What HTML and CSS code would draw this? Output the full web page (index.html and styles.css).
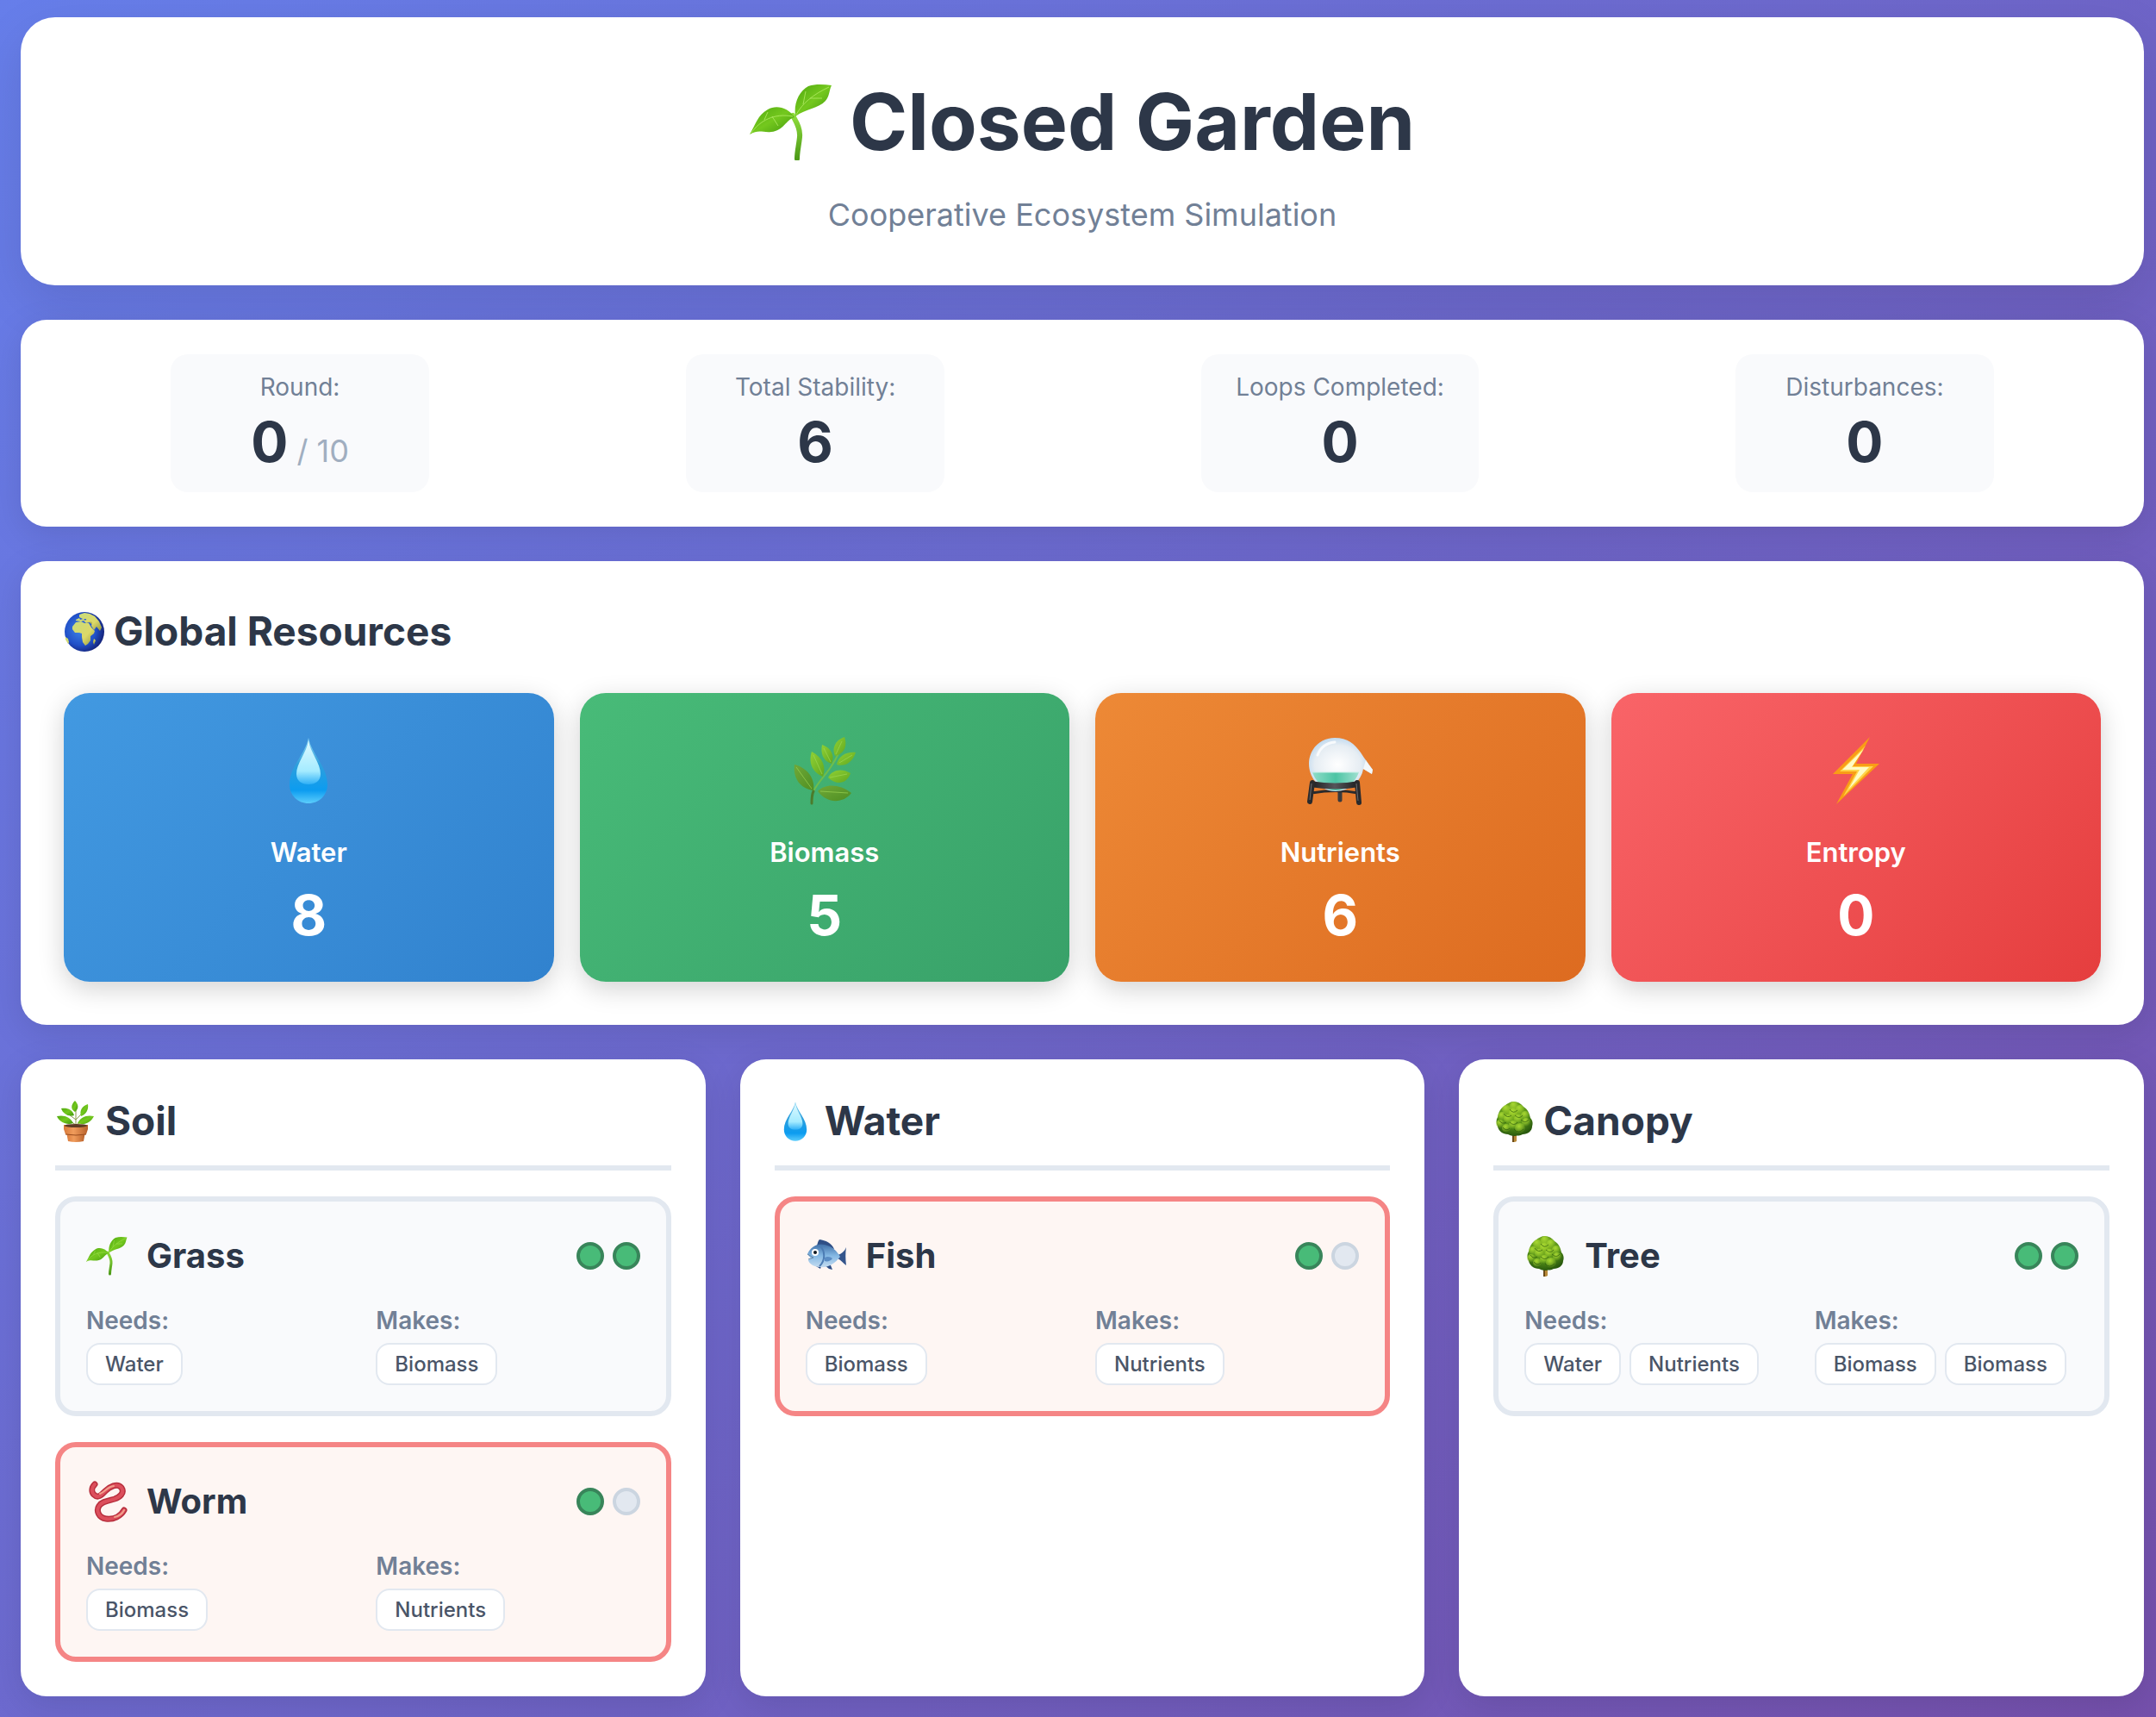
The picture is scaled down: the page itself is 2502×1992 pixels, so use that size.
FILE: index.html
```html
<!DOCTYPE html>
<html lang="en">

<head>
    <meta charset="UTF-8">
    <meta name="viewport" content="width=device-width, initial-scale=1.0">
    <title>Closed Garden</title>
    <link rel="stylesheet" href="styles.css">
</head>

<body>
    <!-- shared icons -->
    <svg class="sprite" aria-hidden="true">
        <defs>
            <linearGradient id="leaf" x1="0" y1="0" x2="1" y2="1">
                <stop offset="0" stop-color="#4fa80f" />
                <stop offset="0.5" stop-color="#74c81e" />
                <stop offset="1" stop-color="#3f960c" />
            </linearGradient>
            <linearGradient id="stem" x1="0" y1="0" x2="0" y2="1">
                <stop offset="0" stop-color="#8fdc3c" />
                <stop offset="1" stop-color="#4c9a17" />
            </linearGradient>
            <linearGradient id="drop" x1="0" y1="0" x2="0" y2="1">
                <stop offset="0" stop-color="#8fd8f5" />
                <stop offset="0.4" stop-color="#2f9fdc" />
                <stop offset="0.8" stop-color="#0c9cf0" />
                <stop offset="1" stop-color="#5ccdfc" />
            </linearGradient>
            <linearGradient id="drop-shine" x1="0" y1="0" x2="0" y2="1">
                <stop offset="0" stop-color="#e0faff" />
                <stop offset="0.7" stop-color="#a4ebff" />
                <stop offset="1" stop-color="#2fb0f7" />
            </linearGradient>
            <radialGradient id="crown" cx="0.45" cy="0.3" r="0.7">
                <stop offset="0" stop-color="#93c424" />
                <stop offset="0.6" stop-color="#548f18" />
                <stop offset="1" stop-color="#2a5a0e" />
            </radialGradient>
            <radialGradient id="clump" cx="0.4" cy="0.3" r="0.7">
                <stop offset="0" stop-color="#a8d832" />
                <stop offset="1" stop-color="#a8d832" stop-opacity="0" />
            </radialGradient>
        </defs>

        <symbol id="sprout" viewBox="0 0 96 88">
            <path d="M50 36c3 6 9 14 8 25-1 10-3 17-3 25" fill="none" stroke="url(#stem)" stroke-width="6" stroke-linecap="round" />
            <path d="M53 37C51 22 57 8 68 2 77-1 86 0 95 1c-3 6-2 12-7 18-8 9-23 9-35 18z" fill="url(#leaf)" />
            <path d="M52 38C45 27 31 23 21 29 9 36 7 46 0 58c10-6 15-2 25-3 14-1 17-14 27-17z" fill="url(#leaf)" />
            <path d="M54 35C61 22 73 12 92 3M62 23l3-15M70 16l14 0M2 56C12 42 28 33 50 37M17 41l4-9M26 37l7 11" fill="none" stroke="#b4ec66" stroke-width="1" opacity="0.8" />
        </symbol>

        <symbol id="droplet" viewBox="0 0 48 80">
            <path d="M24 2C21 20 2 35 2 56c0 13 10 22 22 22s22-9 22-22C46 35 27 20 24 2z" fill="url(#drop)" />
            <path d="M24 5c-2 14-14 26-14 39 0 8 6 12 14 12s14-4 14-12C38 31 26 19 24 5z" fill="url(#drop-shine)" />
        </symbol>

        <symbol id="tree" viewBox="0 0 48 48">
            <path d="M22 36h5v11q-3 2-5 0z" fill="#b98a3a" />
            <path d="M22 36h2v12h-2z" fill="#6b4a18" />
            <path d="M24 1c4 0 8 2 11 6 5 3 7 8 8 13 3 3 3 7 2 10 0 5-5 9-11 9-3 2-6 1-9 2-3 0-6-1-8-2-6 0-11-4-12-9-2-4-2-8 0-11 1-6 4-11 8-13 3-3 7-5 11-5z" fill="url(#crown)" />
            <g fill="url(#clump)">
                <circle cx="24" cy="6" r="5" />
                <circle cx="15" cy="10" r="5" />
                <circle cx="31" cy="10" r="5" />
                <circle cx="23" cy="14" r="5" />
                <circle cx="10" cy="18" r="5" />
                <circle cx="37" cy="17" r="5" />
                <circle cx="17" cy="21" r="5" />
                <circle cx="29" cy="21" r="5" />
                <circle cx="8" cy="27" r="5" />
                <circle cx="23" cy="28" r="5" />
                <circle cx="38" cy="25" r="5" />
                <circle cx="15" cy="32" r="5" />
                <circle cx="31" cy="32" r="6" />
            </g>
            <path d="M19 10q4 6 9 1M12 15q4 6 9 2M25 17q5 5 9 0M7 23q3 5 8 2M19 25q5 5 9 0M32 22q5 5 9 0M11 31q4 5 8 1M24 33q5 6 11 0" fill="none" stroke="#2c5a0c" stroke-width="1" opacity="0.7" />
        </symbol>
    </svg>

    <div class="container">
        <header class="header">
            <h1 class="title">
                <svg class="title-icon" aria-hidden="true"><use href="#sprout" /></svg>
                <span>Closed Garden</span>
            </h1>
            <p class="subtitle">Cooperative Ecosystem Simulation</p>
        </header>

        <section class="stats">
            <div class="stat">
                <span class="stat-label">Round:</span>
                <span class="stat-value">0<span class="stat-max"> / 10</span></span>
            </div>
            <div class="stat">
                <span class="stat-label">Total Stability:</span>
                <span class="stat-value">6</span>
            </div>
            <div class="stat">
                <span class="stat-label">Loops Completed:</span>
                <span class="stat-value">0</span>
            </div>
            <div class="stat">
                <span class="stat-label">Disturbances:</span>
                <span class="stat-value">0</span>
            </div>
        </section>

        <section class="resources">
            <h2 class="section-title">
                <svg class="icon" viewBox="0 0 48 48" aria-hidden="true">
                    <defs>
                        <radialGradient id="sea" cx="0.4" cy="0.45" r="0.6">
                            <stop offset="0" stop-color="#3f86e8" />
                            <stop offset="0.65" stop-color="#2150c8" />
                            <stop offset="1" stop-color="#14247c" />
                        </radialGradient>
                        <linearGradient id="land" x1="0" y1="0" x2="1" y2="1">
                            <stop offset="0" stop-color="#c9dc7c" />
                            <stop offset="0.6" stop-color="#dcd968" />
                            <stop offset="1" stop-color="#8f9440" />
                        </linearGradient>
                    </defs>
                    <circle cx="24" cy="24" r="23" fill="url(#sea)" />
                    <g fill="url(#land)">
                        <path d="M10 18l4-5 6-1 4 2 5 0 3 5 4 4-1 3-4 3 0 5-3 4-3 2-3-4-1-6 0-4-3-1-5 0-3-4z" />
                        <path d="M14 10l4-2 1 2 4-1 2 2 2-3 4 1 5 6-4 0-2-2-4 1-3-3-3 1-6-1z" />
                        <path d="M18 4l6-2 6 1 6 3 5 6 3 7-2 4-4-5-3 4-3-5 1-4-6-4-5 0-4-2z" />
                        <path d="M35 32l2 2-2 5-1-3zM2 30l3 2 1 4-1 2-3-5z" />
                    </g>
                </svg>
                <span>Global Resources</span>
            </h2>
            <div class="resource-grid">
                <div class="resource water">
                    <svg class="resource-icon" aria-hidden="true"><use href="#droplet" /></svg>
                    <span class="resource-name">Water</span>
                    <span class="resource-value">8</span>
                </div>
                <div class="resource biomass">
                    <svg class="resource-icon" viewBox="0 0 80 80" aria-hidden="true">
                        <defs>
                            <linearGradient id="frond" x1="0" y1="0" x2="1" y2="1">
                                <stop offset="0" stop-color="#8fd034" />
                                <stop offset="1" stop-color="#62a81f" />
                            </linearGradient>
                            <linearGradient id="frond-low" x1="0" y1="0" x2="1" y2="1">
                                <stop offset="0" stop-color="#6fa838" />
                                <stop offset="1" stop-color="#4f8f22" />
                            </linearGradient>
                        </defs>
                        <path d="M25 78c1-7 0-11 3-16 5-9 13-17 19-26 4-6 6-9 9-16" fill="none" stroke="#6fbe4c" stroke-width="2" stroke-linecap="round" />
                        <path d="M25 78c0-6 0-10 2-14" fill="none" stroke="#4b7b2c" stroke-width="3" stroke-linecap="round" />
                        <g fill="url(#frond)">
                            <path d="M63 1C52 5 48 14 52 23 62 21 67 12 63 1z" />
                            <path d="M37 10c-2 10 1 19 11 22 4-9 0-18-11-22z" />
                            <path d="M25 18c-4 12 0 24 13 29 4-11 0-22-13-29z" />
                            <path d="M76 19c-11-1-20 4-22 14 9 3 18-2 22-14z" />
                            <path d="M44 48c5-9 15-11 26-5-4 12-16 15-26 5z" />
                        </g>
                        <path d="M5 33c-2 15 6 28 22 30 2-14-7-26-22-30z" fill="url(#frond-low)" />
                        <path d="M32 64c8-9 25-9 39 2-10 13-29 12-39-2z" fill="url(#frond-low)" />
                        <path d="M60 6l-7 15M39 14l8 16M27 22l10 22M7 36l18 25M72 22L57 31M46 48l20-4M35 64l32 2" fill="none" stroke="#a3dc58" stroke-width="1" opacity="0.6" />
                    </svg>
                    <span class="resource-name">Biomass</span>
                    <span class="resource-value">5</span>
                </div>
                <div class="resource nutrients">
                    <svg class="resource-icon" viewBox="0 0 80 80" aria-hidden="true">
                        <defs>
                            <radialGradient id="glass" cx="0.45" cy="0.5" r="0.6">
                                <stop offset="0" stop-color="#ffffff" />
                                <stop offset="0.6" stop-color="#e6edf3" />
                                <stop offset="1" stop-color="#a9cdec" />
                            </radialGradient>
                            <linearGradient id="liquid" x1="0" y1="0" x2="1" y2="0">
                                <stop offset="0" stop-color="#8fdcc8" />
                                <stop offset="0.5" stop-color="#4cc4a4" />
                                <stop offset="1" stop-color="#9fe0d0" />
                            </linearGradient>
                            <linearGradient id="iron" x1="0" y1="0" x2="1" y2="0">
                                <stop offset="0" stop-color="#1c1c1e" />
                                <stop offset="0.5" stop-color="#55565a" />
                                <stop offset="1" stop-color="#1c1c1e" />
                            </linearGradient>
                        </defs>
                        <path d="M40 60v14" stroke="#3a3a3c" stroke-width="5" stroke-linecap="round" />
                        <path d="M7 66q28-5 54 0" fill="none" stroke="#2a2a2c" stroke-width="3" />
                        <path d="M34 2c15 0 23 7 30 17 5 8 10 14 14 20l-1 5-10-6c-2 14-16 26-32 26C17 64 4 49 4 32S17 2 34 2z" fill="url(#glass)" />
                        <path d="M8 42h54c-5 13-15 21-27 21S13 55 8 42z" fill="url(#liquid)" />
                        <path d="M8 42h54" stroke="#c8efe6" stroke-width="1" />
                        <path d="M67 38l10 6 1-5q-5-6-8-11z" fill="#f4f8fa" />
                        <path d="M14 22c3-8 10-14 20-15" fill="none" stroke="#ffffff" stroke-width="3" opacity="0.8" stroke-linecap="round" />
                        <path d="M6 52q28 5 56 0v7q-28 5-56 0z" fill="url(#iron)" />
                        <path d="M8 54L5 76M60 54l2 23" fill="none" stroke="#2a2a2c" stroke-width="6" stroke-linecap="round" />
                        <path d="M7 55L5 74M59 55l2 20" fill="none" stroke="#6c6d70" stroke-width="1" />
                    </svg>
                    <span class="resource-name">Nutrients</span>
                    <span class="resource-value">6</span>
                </div>
                <div class="resource entropy">
                    <svg class="resource-icon" viewBox="0 0 80 80" aria-hidden="true">
                        <path d="M56 1L40 32h27L17 79l19-35H13z" fill="#f99d16" />
                        <path d="M51 11L36 35h24L25 70l16-29H21z" fill="#ffd54a" />
                        <path d="M49 15L35 36h20L31 62l13-23H24z" fill="#fffbc4" />
                    </svg>
                    <span class="resource-name">Entropy</span>
                    <span class="resource-value">0</span>
                </div>
            </div>
        </section>

        <main class="zones">
            <section class="zone">
                <h2 class="zone-title">
                    <svg class="icon" viewBox="0 0 48 48" aria-hidden="true">
                        <defs>
                            <linearGradient id="clay" x1="0" y1="0" x2="1" y2="0">
                                <stop offset="0" stop-color="#d8793a" />
                                <stop offset="0.4" stop-color="#f09c5c" />
                                <stop offset="1" stop-color="#b8602a" />
                            </linearGradient>
                        </defs>
                        <path d="M24 30V10M24 22l-8-6M24 22l8-8M24 28l-8-5M24 28l8-4" fill="none" stroke="#8a9a4a" stroke-width="1" />
                        <g fill="url(#leaf)">
                            <path d="M23 0c-5 5-5 10 0 13 5-4 4-9 0-13z" />
                            <path d="M7 9c2 6 8 10 15 8-2-7-8-9-15-8z" />
                            <path d="M38 4c-7 2-10 8-8 14 6-2 9-8 8-14z" />
                            <path d="M2 18c3 7 12 11 19 8-3-7-11-10-19-8z" />
                            <path d="M45 18c-8-2-16 1-19 8 7 3 15 0 19-8z" />
                        </g>
                        <path d="M13 36h22l-2 11q-9 2-18 0z" fill="url(#clay)" />
                        <path d="M10 28h28v5l-2 6q-12 2-24 0l-2-6z" fill="url(#clay)" />
                        <ellipse cx="24" cy="29" rx="13" ry="2" fill="#5e3a24" />
                        <path d="M12 39q12 2 24 0" fill="none" stroke="#9a4c1e" stroke-width="1" />
                    </svg>
                    <span>Soil</span>
                </h2>
                <article class="species">
                    <div class="species-header">
                        <svg class="icon" aria-hidden="true"><use href="#sprout" /></svg>
                        <h3 class="species-name">Grass</h3>
                        <span class="dot filled"></span>
                        <span class="dot filled"></span>
                    </div>
                    <div class="species-info">
                        <div>
                            <h4 class="info-label">Needs:</h4>
                            <div class="tags"><span class="tag">Water</span></div>
                        </div>
                        <div>
                            <h4 class="info-label">Makes:</h4>
                            <div class="tags"><span class="tag">Biomass</span></div>
                        </div>
                    </div>
                </article>
                <article class="species stressed">
                    <div class="species-header">
                        <svg class="icon" viewBox="0 0 48 48" aria-hidden="true">
                            <path d="M10 4C6 8 6 13 9 16c5 5 9 0 13-4 5-5 14-10 19-4 4 6-2 11-8 13-7 2-15 3-18 8-4 6 0 14 8 15 9 1 17-3 21-10" fill="none" stroke="#b8303e" stroke-width="7" stroke-linecap="round" />
                            <path d="M10 4C6 8 6 13 9 16c5 5 9 0 13-4 5-5 14-10 19-4 4 6-2 11-8 13-7 2-15 3-18 8-4 6 0 14 8 15 9 1 17-3 21-10" fill="none" stroke="#dc4f5c" stroke-width="4" stroke-linecap="round" />
                            <path d="M16 15c6-2 8-8 16-9M33 42c5-1 9-4 11-8" fill="none" stroke="#f2a08c" stroke-width="2" stroke-linecap="round" />
                        </svg>
                        <h3 class="species-name">Worm</h3>
                        <span class="dot filled"></span>
                        <span class="dot"></span>
                    </div>
                    <div class="species-info">
                        <div>
                            <h4 class="info-label">Needs:</h4>
                            <div class="tags"><span class="tag">Biomass</span></div>
                        </div>
                        <div>
                            <h4 class="info-label">Makes:</h4>
                            <div class="tags"><span class="tag">Nutrients</span></div>
                        </div>
                    </div>
                </article>
            </section>

            <section class="zone">
                <h2 class="zone-title">
                    <svg class="icon" aria-hidden="true"><use href="#droplet" /></svg>
                    <span>Water</span>
                </h2>
                <article class="species stressed">
                    <div class="species-header">
                        <svg class="icon" viewBox="0 0 48 48" aria-hidden="true">
                            <defs>
                                <linearGradient id="scales" x1="0" y1="0" x2="0" y2="1">
                                    <stop offset="0" stop-color="#3f6fa8" />
                                    <stop offset="0.5" stop-color="#84b8e4" />
                                    <stop offset="1" stop-color="#c4dcf0" />
                                </linearGradient>
                            </defs>
                            <path d="M13 12c1-3 1-5 3-7 7 1 14 4 17 11z" fill="#2f4f86" />
                            <path d="M37 23c4-1 8-4 10-9-1 7-1 13 0 21-3-2-6-6-10-8z" fill="#34558c" />
                            <path d="M22 35l7 0 2 5-4-1z M12 36l6 0-1 3z" fill="#2f4f86" />
                            <path d="M2 22C6 13 14 9 22 11c9 2 14 7 18 14-6 8-14 13-23 12C9 37 4 33 3 29l3-2z" fill="url(#scales)" />
                            <path d="M16 12c7 6 7 17 0 24" fill="none" stroke="#4c7cb4" stroke-width="2" />
                            <path d="M22 26c3-2 7-1 9 1-2 3-6 4-9 3z" fill="#5a8cc4" />
                            <path d="M2 22l7 4-6 2" fill="none" stroke="#6484a4" stroke-width="1" />
                            <circle cx="11" cy="20" r="4" fill="#ffffff" />
                            <circle cx="11" cy="20" r="2" fill="#101820" />
                        </svg>
                        <h3 class="species-name">Fish</h3>
                        <span class="dot filled"></span>
                        <span class="dot"></span>
                    </div>
                    <div class="species-info">
                        <div>
                            <h4 class="info-label">Needs:</h4>
                            <div class="tags"><span class="tag">Biomass</span></div>
                        </div>
                        <div>
                            <h4 class="info-label">Makes:</h4>
                            <div class="tags"><span class="tag">Nutrients</span></div>
                        </div>
                    </div>
                </article>
            </section>

            <section class="zone">
                <h2 class="zone-title">
                    <svg class="icon" aria-hidden="true"><use href="#tree" /></svg>
                    <span>Canopy</span>
                </h2>
                <article class="species">
                    <div class="species-header">
                        <svg class="icon" aria-hidden="true"><use href="#tree" /></svg>
                        <h3 class="species-name">Tree</h3>
                        <span class="dot filled"></span>
                        <span class="dot filled"></span>
                    </div>
                    <div class="species-info">
                        <div>
                            <h4 class="info-label">Needs:</h4>
                            <div class="tags"><span class="tag">Water</span><span class="tag">Nutrients</span></div>
                        </div>
                        <div>
                            <h4 class="info-label">Makes:</h4>
                            <div class="tags"><span class="tag">Biomass</span><span class="tag">Biomass</span></div>
                        </div>
                    </div>
                </article>
            </section>
        </main>
    </div>
</body>

</html>
```
FILE: styles.css
```css
* {
    box-sizing: border-box;
    margin: 0;
    padding: 0;
}

body {
    min-height: 100vh;
    padding: 20px 14px 24px 24px;
    font-family: Inter, "Liberation Sans", sans-serif;
    color: #2d3748;
    background: linear-gradient(135deg, #667eea 0%, #7550ac 100%);
}

.sprite {
    position: absolute;
    width: 0;
    height: 0;
}

.container {
    display: flex;
    flex-direction: column;
    gap: 40px;
}

.header,
.stats,
.resources,
.zone {
    background: #fff;
    border-radius: 30px;
    box-shadow: 0 10px 40px rgba(0, 0, 0, 0.1);
}

/* header */
.header {
    padding: 60px 60px 58px;
    text-align: center;
    border-radius: 40px;
    box-shadow: 0 20px 60px rgba(0, 0, 0, 0.1);
}

.title {
    display: flex;
    justify-content: center;
    align-items: center;
    gap: 20px;
    margin-bottom: 22px;
    font-size: 91px;
    line-height: 123px;
    font-weight: 700;
}

.title-icon {
    width: 96px;
    height: 88px;
}

.subtitle {
    font-size: 36px;
    line-height: 48px;
    color: #718096;
}

/* stats */
.stats {
    display: flex;
    justify-content: space-around;
    gap: 30px;
    padding: 40px;
}

.stat {
    display: flex;
    flex-direction: column;
    min-width: 300px;
    padding: 16px 40px;
    text-align: center;
    background: #f9fafc;
    border-radius: 20px;
}

.stat-label {
    font-size: 28px;
    line-height: 44px;
    color: #718096;
}

.stat-value {
    font-size: 64px;
    line-height: 84px;
    font-weight: 700;
}

.stat-max {
    font-size: 36px;
    line-height: 36px;
    font-weight: 400;
    color: #a0aec0;
}

/* resources */
.resources {
    padding: 50px;
}

.section-title,
.zone-title {
    display: flex;
    align-items: center;
    gap: 10px;
    font-size: 46px;
    line-height: 63px;
    font-weight: 700;
}

.section-title {
    margin-bottom: 40px;
}

.icon {
    flex: none;
    width: 48px;
    height: 48px;
}

.resource-grid {
    display: grid;
    grid-template-columns: repeat(4, 1fr);
    gap: 30px;
}

.resource {
    display: flex;
    flex-direction: column;
    align-items: center;
    padding: 50px 30px 35px;
    color: #fff;
    border-radius: 30px;
    box-shadow: 0 8px 30px rgba(0, 0, 0, 0.18);
}

.water {
    background: linear-gradient(135deg, #4299e1, #3182ce);
}

.biomass {
    background: linear-gradient(135deg, #48bb78, #38a169);
}

.nutrients {
    background: linear-gradient(135deg, #ed8936, #dd6b20);
}

.entropy {
    background: linear-gradient(135deg, #f96468, #e53e3e);
}

.resource-icon {
    width: 80px;
    height: 80px;
    margin-bottom: 30px;
}

.resource-name {
    margin-bottom: 6px;
    font-size: 31px;
    line-height: 50px;
    font-weight: 600;
}

.resource-value {
    font-size: 64px;
    line-height: 84px;
    font-weight: 700;
}

/* zones */
.zones {
    display: grid;
    grid-template-columns: repeat(3, 1fr);
    gap: 40px;
}

.zone {
    display: flex;
    flex-direction: column;
    gap: 30px;
    padding: 40px;
}

.zone-title {
    padding-bottom: 20px;
    border-bottom: 6px solid #e2e8f0;
}

.species {
    padding: 30px;
    background: #f9fafc;
    border: 6px solid #e2e8f0;
    border-radius: 24px;
}

.stressed {
    background: #fef6f3;
    border-color: #f58585;
}

.species-header {
    display: flex;
    align-items: center;
    gap: 10px;
    margin-bottom: 20px;
}

.species-name {
    flex: 1;
    padding-left: 12px;
    font-size: 40px;
    line-height: 66px;
    font-weight: 700;
}

.dot {
    width: 32px;
    height: 32px;
    background: #e2e8f0;
    border: 4px solid #cbd5e0;
    border-radius: 50%;
}

.dot.filled {
    background: #48bb78;
    border-color: #38855a;
}

.species-info {
    display: grid;
    grid-template-columns: 1fr 1fr;
    gap: 30px;
}

.info-label {
    margin-bottom: 4px;
    font-size: 28px;
    line-height: 44px;
    font-weight: 600;
    color: #718096;
}

.tags {
    display: flex;
    flex-wrap: wrap;
    gap: 10px;
}

.tag {
    padding: 6px 20px;
    font-size: 24px;
    line-height: 33px;
    font-weight: 500;
    color: #4a5568;
    background: #fff;
    border: 2px solid #e2e8f0;
    border-radius: 16px;
}
```
